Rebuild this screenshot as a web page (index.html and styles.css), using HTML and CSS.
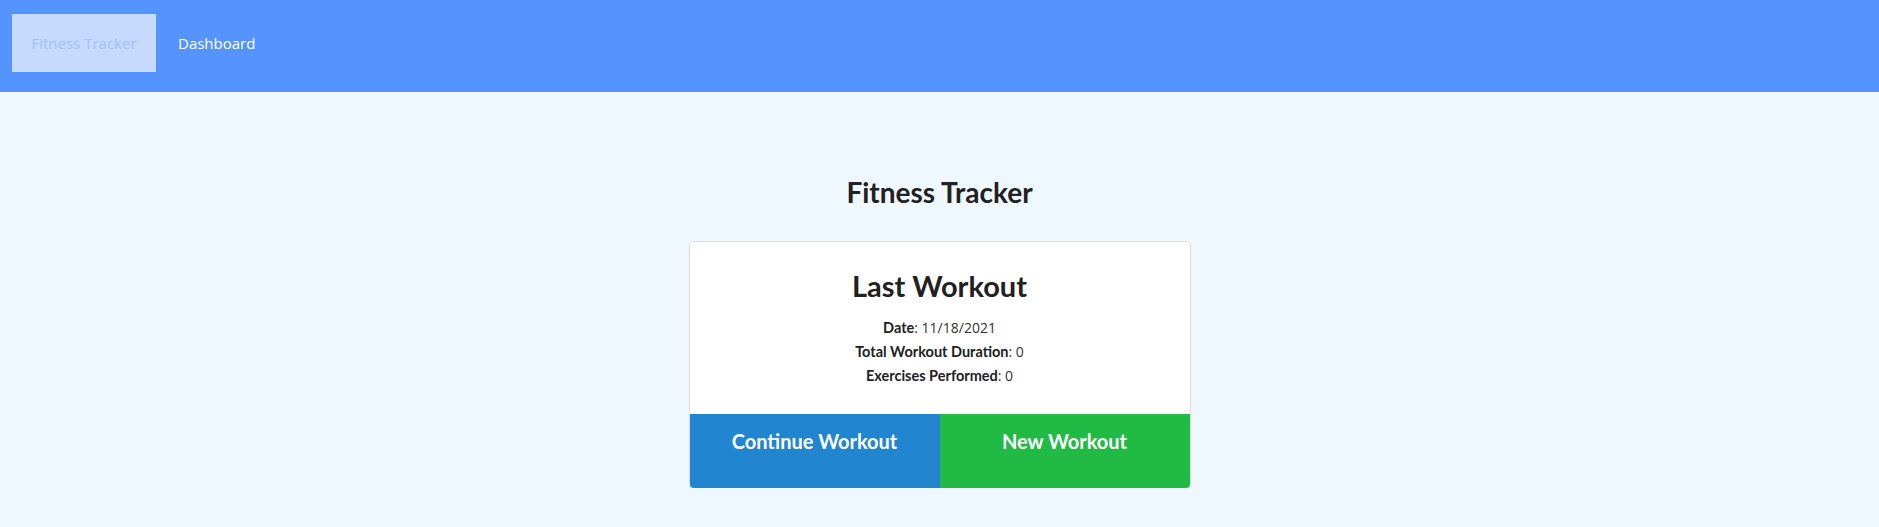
FILE: index.html
```html
<!DOCTYPE html>
<html>
<head>
<meta charset="utf-8">
<link rel="stylesheet" href="styles.css">
</head>
<body>
<nav class="topnav">
  <a class="nav-item active">Fitness Tracker</a>
  <a class="nav-item">Dashboard</a>
</nav>
<main class="main">
  <h1 class="page-title">Fitness Tracker</h1>
  <div class="card">
    <div class="card-body">
      <h2 class="card-title">Last Workout</h2>
      <p class="stat"><strong>Date</strong>: 11/18/2021</p>
      <p class="stat"><strong>Total Workout Duration</strong>: 0</p>
      <p class="stat"><strong>Exercises Performed</strong>: 0</p>
    </div>
    <div class="card-actions">
      <a class="btn btn-blue">Continue Workout</a>
      <a class="btn btn-green">New Workout</a>
    </div>
  </div>
</main>
</body>
</html>
```
FILE: styles.css
```css
* { box-sizing: border-box; }
html, body { margin: 0; padding: 0; }
body {
  background: #f0f8ff;
  font-family: "Open Sans", "Noto Sans", sans-serif;
  color: #212121;
}
.topnav {
  height: 92px;
  background: #5593fe;
  display: flex;
  align-items: flex-start;
  padding: 14px 12px 0;
  gap: 22px;
}
.nav-item {
  font-size: 15px;
  color: #ffffff;
  text-decoration: none;
  height: 58px;
  display: flex;
  align-items: center;
}
.nav-item.active {
  background: #c6dafe;
  color: #a2c0f2;
  width: 144px;
  justify-content: center;
}
.main {
  display: flex;
  flex-direction: column;
  align-items: center;
  padding-top: 80px;
}
.page-title {
  font-family: Lato, sans-serif;
  font-weight: 700;
  font-size: 28px;
  line-height: 40px;
  margin: 0 0 30px;
  color: #212121;
}
.card {
  width: 500px;
  background: #fff;
  border-radius: 4px;
  box-shadow: 0 1px 3px 0 #d4d4d5, 0 0 0 1px #e3e3e5;
  overflow: hidden;
}
.card-body {
  padding: 26px 16px 26px;
  text-align: center;
}
.card-title {
  font-family: Lato, sans-serif;
  font-weight: 700;
  font-size: 29px;
  line-height: 36px;
  margin: 0 0 12px;
}
.stat {
  margin: 0;
  font-size: 14px;
  line-height: 24px;
  color: #333;
}
.stat strong {
  font-family: Lato, sans-serif;
  font-weight: 700;
  font-size: 14.5px;
  color: #212121;
}
.card-actions {
  display: flex;
  height: 74px;
}
.btn {
  flex: 1;
  display: flex;
  justify-content: center;
  padding-top: 13px;
  font-family: Lato, sans-serif;
  font-weight: 700;
  font-size: 20px;
  color: #fff;
  line-height: 28px;
}
.btn-blue { background: #2185d0; }
.btn-green { background: #21ba45; }
```
